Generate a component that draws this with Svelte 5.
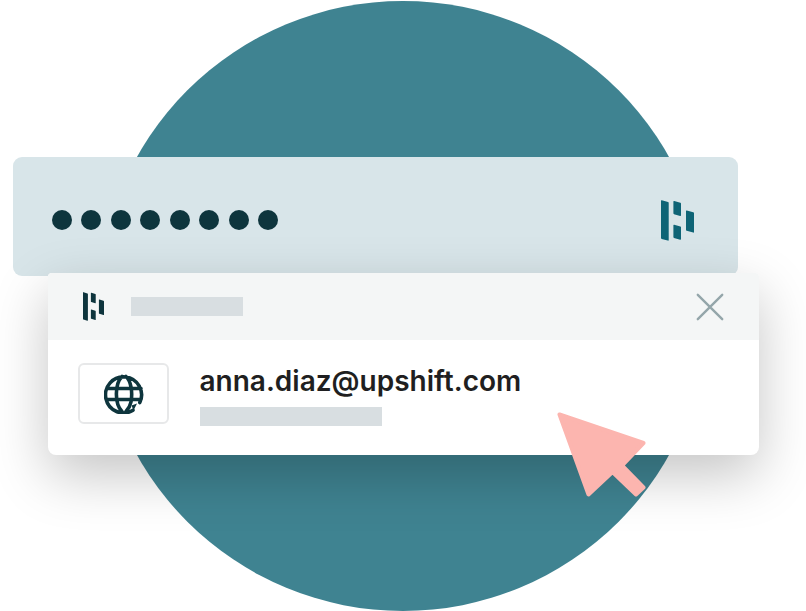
<script>
  const dots = Array.from({ length: 8 });
  const email = 'anna.diaz@upshift.com';
</script>

{#snippet logo(cls)}
  <svg class={cls} viewBox="0 0 33 41" preserveAspectRatio="none" aria-hidden="true">
    <path d="M0 .7Q0 0 .8.2L7 2Q7.7 2.2 7.7 3V40Q7.7 40.9 6.8 40.6L.7 38.9Q0 38.700 0 38ZM12.400 1.500Q12.400.8 13.200 1L19.400 2.800Q20 3 20 3.700V15.300Q20 16.200 19.200 16L13 14.200Q12.400 14 12.400 13.300ZM25 11Q25 10.300 25.800 10.500L32.200 12.300Q33 12.500 33 13.300V32Q33 32.800 32.200 32.600L25.700 30.800Q25 30.600 25 29.900ZM12.400 25.200Q12.400 24.500 13.200 24.700L19.400 26.500Q20 26.700 20 27.400V39Q20 39.900 19.200 39.700L13 37.900Q12.400 37.700 12.400 37Z" />
  </svg>
{/snippet}

<main class="scene">
  <div class="disc"></div>

  <section class="field">
    <div class="dots">
      {#each dots as _}<i></i>{/each}
    </div>
    {@render logo('field-logo')}
  </section>

  <section class="popup">
    <header>
      {@render logo('small-logo')}
      <span class="title-bar"></span>
      <svg class="close" viewBox="0 0 28 28" aria-hidden="true">
        <path d="M1.800 1.800 26.200 26.200M26.200 1.800 1.800 26.200" />
      </svg>
    </header>
    <div class="row">
      <div class="tile">
        <svg class="globe" viewBox="0 0 40 40" aria-hidden="true">
          <path d="M29 36.200A18 18 0 1 1 35.800 28.600M3 14.500H37M3 25.500H37M18 2.500C10.500 10 10.500 30 18 37.500M22 2.500C27 7 28.800 18 27 28Q26 33 22 37.500" />
          <path class="tip" d="M27.500 31.500 33 29.500 29.500 36.500Z" />
        </svg>
      </div>
      <div class="account">
        <span class="email">{email}</span>
        <span class="sub-bar"></span>
      </div>
    </div>
  </section>

  <svg class="cursor" viewBox="0 0 90 86" aria-hidden="true">
    <path d="M2.500 2.500 86.500 31 65 53.500 86.500 75.500 79 82.500 55.500 60 31.500 82.500Z" />
  </svg>
</main>

<style>
  :global(body) {
    background: #fff;
  }

  .scene {
    position: relative;
    box-sizing: border-box;
    width: 806px;
    height: 611px;
    padding: 157px 0 0 13px;
    overflow: hidden;
    font-family: Inter, "Liberation Sans", sans-serif;
  }

  .disc {
    position: absolute;
    left: 98px;
    top: 0.500px;
    width: 610px;
    height: 610px;
    border-radius: 50%;
    background: #3f8391;
  }

  .field {
    position: relative;
    box-sizing: border-box;
    width: 725px;
    height: 119px;
    padding: 0 44.500px 0 39px;
    border-radius: 9px;
    background: #d8e5e9;
    display: flex;
    align-items: center;
    justify-content: space-between;
  }

  .dots {
    display: flex;
    gap: 9.450px;
    padding-top: 7px;
  }

  .dots i {
    width: 20px;
    height: 20px;
    border-radius: 50%;
    background: #0e353d;
  }

  .field-logo {
    width: 33px;
    height: 41px;
    margin-top: 7px;
    fill: #0e6476;
  }

  .popup {
    position: relative;
    width: 711px;
    height: 182px;
    margin: -3px 0 0 34.500px;
    border-radius: 4px 4px 8px 8px;
    background: #fff;
    box-shadow: 0 20px 55px rgba(0, 0, 0, 0.23);
  }

  header {
    box-sizing: border-box;
    height: 67px;
    padding: 0 35px 0 35.500px;
    border-radius: 4px 4px 0 0;
    background: #f4f6f6;
    display: flex;
    align-items: center;
  }

  .small-logo {
    width: 21px;
    height: 29px;
    fill: #0e353d;
  }

  .title-bar {
    width: 112px;
    height: 19px;
    margin-left: 27px;
    background: #d8dee1;
  }

  .close {
    width: 28px;
    height: 28px;
    margin-left: auto;
    fill: none;
    stroke: #94a6aa;
    stroke-width: 2.400;
    stroke-linecap: round;
  }

  .row {
    display: flex;
    padding: 23px 0 0 30.500px;
  }

  .tile {
    box-sizing: border-box;
    width: 91px;
    height: 61px;
    border: 2px solid #e7e8e9;
    border-radius: 6px;
    display: flex;
    align-items: center;
    justify-content: center;
  }

  .globe {
    width: 40px;
    height: 40px;
    fill: none;
    stroke: #0e353d;
    stroke-width: 3.600;
    stroke-linecap: round;
  }

  .globe .tip {
    fill: #0e353d;
    stroke: none;
  }

  .account {
    margin-left: 30.500px;
    display: flex;
    flex-direction: column;
  }

  .email {
    height: 44px;
    line-height: 36px;
    font-size: 28px;
    font-weight: 600;
    color: #1f1f21;
    white-space: nowrap;
  }

  .sub-bar {
    width: 182px;
    height: 19px;
    background: #d8dee1;
  }

  .cursor {
    position: absolute;
    left: 557px;
    top: 412px;
    width: 90px;
    height: 86px;
    fill: #fcb5af;
    stroke: #fcb5af;
    stroke-width: 4;
    stroke-linejoin: round;
  }
</style>
